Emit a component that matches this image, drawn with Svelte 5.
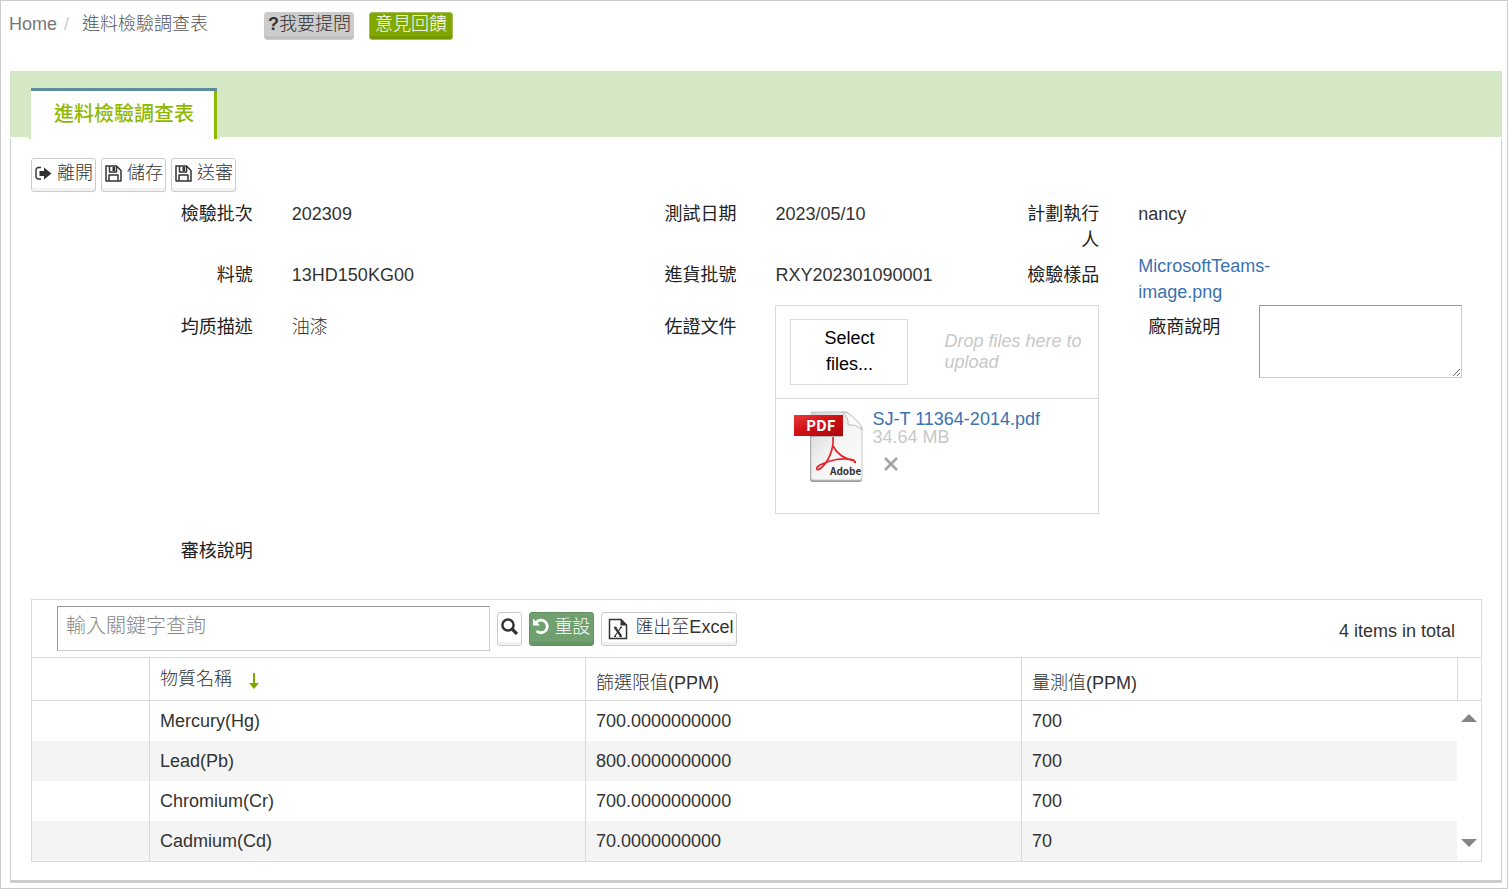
<script lang="ts">
	let keyword = $state('');
	let note = $state('');
	let ascending = $state(true);

	const rows = [
		{ name: 'Mercury(Hg)', limit: '700.0000000000', value: '700' },
		{ name: 'Lead(Pb)', limit: '800.0000000000', value: '700' },
		{ name: 'Chromium(Cr)', limit: '700.0000000000', value: '700' },
		{ name: 'Cadmium(Cd)', limit: '70.0000000000', value: '70' }
	];

	function reset() {
		keyword = '';
	}
</script>

{#snippet saveIcon()}
	<svg class="icon" viewBox="0 0 17 17" aria-hidden="true">
		<path d="M1 1h10.5l4.5 4.5v10.5h-15z M4 16v-6h9v6 M4.5 1.5v5.5h7V1.5" fill="none" stroke="#333" stroke-width="1.5" stroke-linejoin="round" />
		<path d="M7.5 2h2.5v4H7.5z" fill="#333" />
	</svg>
{/snippet}

<div class="page">
	<header>
		<nav class="breadcrumb">
			<a href="#home">Home</a>
			<span class="slash">/</span>
			<span>進料檢驗調查表</span>
		</nav>
		<button class="small ask"><b>?</b>我要提問</button>
		<button class="small feedback">意見回饋</button>
	</header>

	<div class="band">
		<div class="tab-wrap">
			<a class="tab" href="#survey">進料檢驗調查表</a>
		</div>
	</div>

	<main>
		<div class="actions">
			<button class="btn">
				<svg class="icon" viewBox="0 0 17 17" aria-hidden="true">
					<path d="M6 2.5H3.5a2.5 2.5 0 0 0-2.5 2.5v6.5a2.5 2.5 0 0 0 2.5 2.5H6" fill="none" stroke="#333" stroke-width="1.4" />
					<path d="M4.5 6h4.5V2.5L16.5 8.5l-7.5 6V11h-4.5z" fill="#333" />
				</svg>
				離開
			</button>
			<button class="btn">{@render saveIcon()}儲存</button>
			<button class="btn">{@render saveIcon()}送審</button>
		</div>

		<div class="row">
			<div class="label w2">檢驗批次</div>
			<div class="value w3">202309</div>
			<div class="label">測試日期</div>
			<div class="value w2">2023/05/10</div>
			<div class="label">計劃執行人</div>
			<div class="value w3">nancy</div>
		</div>
		<div class="row">
			<div class="label w2">料號</div>
			<div class="value w3">13HD150KG00</div>
			<div class="label">進貨批號</div>
			<div class="value w2">RXY202301090001</div>
			<div class="label">檢驗樣品</div>
			<div class="field w2"><a href="#sample">MicrosoftTeams-image.png</a></div>
		</div>
		<div class="row">
			<div class="label w2">均质描述</div>
			<div class="value w3">油漆</div>
			<div class="label">佐證文件</div>
			<div class="field w3">
				<div class="upload">
					<div class="drop">
						<button class="select">Select files...</button>
						<em>Drop files here to upload</em>
					</div>
					<div class="file">
						<svg class="pdf" viewBox="0 0 70 74" aria-hidden="true">
							<defs>
								<linearGradient id="paper" x1="0" y1="0" x2="1" y2="1">
									<stop offset="0" stop-color="#d4d4d4" />
									<stop offset="0.5" stop-color="#f4f4f4" />
									<stop offset="1" stop-color="#fff" />
								</linearGradient>
								<linearGradient id="ribbon" x1="0" y1="0" x2="1" y2="1">
									<stop offset="0" stop-color="#e8393a" />
									<stop offset="0.45" stop-color="#d11115" />
									<stop offset="1" stop-color="#a8070c" />
								</linearGradient>
							</defs>
							<path d="M16 5h38l14 14v50q0 3-3 3H19q-3 0-3-3z" fill="#999" />
							<path d="M17 2h36l15 15v51q0 2-2 2H19q-2 0-2-2z" fill="url(#paper)" stroke="#c8c8c8" />
							<path d="M48 2q7 5 6 13 8-1 14 5 0-5-5-9l-5-5q-4-4-10-4z" fill="#fafafa" stroke="#bbb" />
							<path d="M0 5h49v21H0z" fill="url(#ribbon)" />
							<path d="M16 26h33v1H16z" fill="#000" opacity="0.2" />
							<text x="12" y="21" class="pdf-name">PDF</text>
							<path d="M39 27c1 13-5 25-12 31-5 4-6 0-1-3 9-5 23-8 34-5M39 36q6 12 22 15" fill="none" stroke="#e5242a" stroke-width="1.7" stroke-linejoin="round" />
							<circle cx="61" cy="52" r="1.2" fill="#e5242a" />
							<text x="36" y="65" class="pdf-brand">Adobe</text>
						</svg>
						<div class="file-info">
							<a href="#pdf">SJ-T 11364-2014.pdf</a>
							<span>34.64 MB</span>
							<button class="remove" aria-label="Remove">
								<svg viewBox="0 0 14 14" aria-hidden="true">
									<path d="M1 1l12 12M13 1L1 13" stroke="#a3a3a3" stroke-width="2.6" />
								</svg>
							</button>
						</div>
					</div>
				</div>
			</div>
			<label class="label" for="note">廠商說明</label>
			<div class="field w2"><textarea id="note" bind:value={note}></textarea></div>
		</div>
		<div class="row review">
			<div class="label w2">審核說明</div>
		</div>

		<section class="grid">
			<div class="toolbar">
				<input type="text" placeholder="輸入關鍵字查詢" aria-label="輸入關鍵字查詢" bind:value={keyword} />
				<button class="btn" aria-label="Search">
					<svg class="icon" viewBox="0 0 17 17" aria-hidden="true">
						<circle cx="7" cy="7" r="5.6" fill="none" stroke="#333" stroke-width="2.5" />
						<path d="M11 11l5 5" stroke="#333" stroke-width="3.2" />
					</svg>
				</button>
				<button class="btn reset" onclick={reset}>
					<svg class="icon" viewBox="0 0 17 17" aria-hidden="true">
						<path d="M3 4.6A6.3 6.3 0 1 1 3.6 13" fill="none" stroke="#fff" stroke-width="2.8" />
						<path d="M0 0.5v7h7z" fill="#fff" />
					</svg>
					重設
				</button>
				<button class="btn export">
					<svg class="excel" viewBox="0 0 20 22" aria-hidden="true">
						<path d="M1.5 1.5h11.5l5.5 5.5v13.5h-17z" fill="#fff" stroke="#333" stroke-width="1.5" />
						<path d="M12.5 1l6.5 6.5h-6.5z" fill="#333" />
						<path d="M7 9.5l6 8.5" stroke="#333" stroke-width="2.2" />
						<path d="M13 9.5l-6 8.5M6 9.3h2.5M12 9.3h2M6 18.3h2M11.5 18.3H14" stroke="#333" stroke-width="1.2" />
					</svg>
					匯出至Excel
				</button>
				<span class="total">4 items in total</span>
			</div>

			<div class="data">
				<table>
					<colgroup>
						<col class="blank" />
						<col />
						<col />
						<col />
					</colgroup>
					<thead>
						<tr>
							<th></th>
							<th class="sorted">
								<button onclick={() => (ascending = !ascending)}>
									物質名稱
									<svg class:flip={!ascending} viewBox="0 0 12 18" aria-hidden="true">
										<path d="M5 1h2v10h4l-5 6-5-6h4z" fill="#7ea700" />
									</svg>
								</button>
							</th>
							<th>篩選限值(PPM)</th>
							<th>量測值(PPM)</th>
						</tr>
					</thead>
					<tbody>
						{#each rows as row}
							<tr>
								<td></td>
								<td>{row.name}</td>
								<td>{row.limit}</td>
								<td>{row.value}</td>
							</tr>
						{/each}
					</tbody>
				</table>
				<div class="scroll">
					<div class="scroll-head"></div>
					<div class="scroll-track">
						<button aria-label="Scroll up">
							<svg viewBox="0 0 16 8" aria-hidden="true"><path d="M0 8l8-8 8 8z" fill="#858585" /></svg>
						</button>
						<button aria-label="Scroll down">
							<svg viewBox="0 0 16 8" aria-hidden="true"><path d="M0 0l8 8 8-8z" fill="#858585" /></svg>
						</button>
					</div>
				</div>
			</div>
		</section>
	</main>
</div>

<style>
	:global(body) {
		background: #fff;
	}

	.page {
		box-sizing: border-box;
		min-height: 100vh;
		padding: 0 5px 5px 9px;
		border: 1px solid #ccc;
		font-family: 'Liberation Sans', 'Noto Sans CJK TC', sans-serif;
		font-size: 18px;
		font-weight: 300;
		line-height: 26px;
		color: #333;
	}

	.page * {
		box-sizing: border-box;
	}

	button,
	input,
	textarea {
		font: inherit;
		color: inherit;
	}

	button {
		cursor: pointer;
	}

	a {
		color: #3a72b0;
		text-decoration: none;
	}

	header {
		display: flex;
		align-items: flex-start;
		height: 70px;
		padding-top: 10px;
	}

	.breadcrumb {
		display: flex;
		margin: 0 56px 0 -1px;
		color: #555;
	}

	.breadcrumb a {
		color: #777;
	}

	.slash {
		width: 25px;
		padding-left: 7px;
		color: #ccc;
	}

	.small {
		height: 28px;
		margin: 1px 15px 0 0;
		padding: 0 4px 4px;
		border: 1px solid #ccc;
		border-radius: 3px;
		line-height: 22px;
	}

	.ask {
		padding: 0 2px 4px 3px;
		background: #ccc;
		box-shadow: inset 0 -3px 0 #bfbfbf;
	}

	.small b {
		font-weight: 700;
	}

	.feedback {
		padding: 0 5px 4px;
		border-color: #a3bd58;
		background: #80a800;
		box-shadow: inset 0 -3px 0 #759a00;
		color: #fff;
	}

	.band {
		display: flex;
		height: 66px;
		padding: 17px 18px 0;
		background: #d5e8c6;
	}

	.tab-wrap {
		height: 51px;
		padding: 0 3px;
		background: #d5e8c6;
	}

	.tab {
		display: block;
		height: 51px;
		padding: 10px 23px 0;
		border-top: 3px solid #5b8c9b;
		background: #fff;
		box-shadow: inset -3px 0 0 #8fb800;
		font-size: 20px;
		font-weight: 500;
		color: #8fb800;
	}

	main {
		margin-top: 2px;
		padding: 19px 19px 18px 20px;
		border: 1px solid #ccc;
		border-width: 0 1px 3px;
	}

	.actions {
		display: flex;
		gap: 5px;
	}

	.btn {
		display: flex;
		align-items: center;
		gap: 5px;
		height: 34px;
		padding: 0 2px 4px 3px;
		border: 1px solid #ccc;
		border-radius: 3px;
		background: #fff;
		box-shadow: inset 0 -3px 0 #f2f2f2;
	}

	.icon {
		width: 17px;
		height: 17px;
	}

	.row {
		display: grid;
		grid-template-columns: repeat(12, 1fr);
	}

	.review {
		margin-top: 15px;
	}

	.label,
	.value {
		padding: 9px 20px 0 19px;
	}

	.label {
		font-weight: 400;
		text-align: right;
		color: #222;
	}

	.field {
		padding: 0 20px 0 19px;
	}

	.w2 {
		grid-column: span 2;
	}

	.w3 {
		grid-column: span 3;
	}

	.upload {
		border: 1px solid #dadada;
	}

	.drop {
		display: flex;
		align-items: center;
		padding: 13px 14px;
		border-bottom: 1px solid #dadada;
	}

	.select {
		flex: none;
		width: 118px;
		height: 66px;
		margin-right: 36px;
		padding: 0 30px 2px;
		border: 1px solid #dadada;
		background: #fff;
		color: #000;
	}

	.drop em {
		line-height: 21px;
		color: #c8c8c8;
	}

	.file {
		display: flex;
		gap: 8px;
		min-height: 114px;
		padding: 11px 18px;
	}

	.pdf {
		flex: none;
		width: 70px;
		height: 74px;
	}

	.pdf-name {
		font: 600 15px 'Noto Sans CJK TC', sans-serif;
		fill: #fff;
	}

	.pdf-brand {
		font: 700 10px 'Noto Sans CJK TC', sans-serif;
		fill: #333;
	}

	.file-info {
		display: flex;
		flex-direction: column;
		align-items: flex-start;
		line-height: 18px;
	}

	.file-info span {
		color: #c8c8c8;
	}

	.remove {
		display: flex;
		margin: 11px 12px;
		padding: 0;
		border: 0;
		background: none;
	}

	.remove svg {
		width: 14px;
		height: 14px;
	}

	textarea {
		display: block;
		width: 100%;
		height: 73px;
		border: 1px solid #ccc;
		border-top-color: #999;
		border-left-color: #999;
	}

	.grid {
		margin-top: 35px;
		border: 1px solid #dadada;
	}

	.toolbar {
		display: flex;
		align-items: center;
		gap: 7px;
		height: 57px;
		padding: 0 26px 0 25px;
	}

	.toolbar input {
		width: 31%;
		height: 45px;
		padding: 0 8px 4px;
		border: 1px solid #ccc;
		border-top-color: #999;
		border-left-color: #999;
		font-size: 20px;
	}

	.toolbar input::placeholder {
		color: #888;
	}

	.toolbar .btn {
		padding-right: 3px;
	}

	.toolbar .reset {
		gap: 4px;
		border-color: #649064;
		background: #70a070;
		box-shadow: inset 0 -3px 0 #669566;
		color: #fff;
	}

	.toolbar .export {
		gap: 7px;
		padding-left: 6px;
	}

	.excel {
		width: 20px;
		height: 22px;
		margin-top: 4px;
	}

	.total {
		margin-left: auto;
		padding-top: 5px;
	}

	.data {
		display: flex;
	}

	table {
		flex: 1;
		width: 100%;
		table-layout: fixed;
		border-collapse: separate;
		border-spacing: 0;
	}

	.blank {
		width: 117px;
	}

	th {
		height: 44px;
		padding: 0 10px 4px;
		border: 1px solid #dadada;
		border-width: 1px 0 1px 1px;
		font-weight: 300;
		text-align: left;
		vertical-align: bottom;
	}

	th:first-child,
	td:first-child {
		border-left: 0;
	}

	th button {
		display: flex;
		align-items: center;
		gap: 16px;
		padding: 0;
		border: 0;
		background: none;
	}

	.sorted {
		padding-bottom: 8px;
	}

	.sorted svg {
		width: 12px;
		height: 18px;
		margin-top: 4px;
	}

	.flip {
		transform: scaleY(-1);
	}

	td {
		height: 40px;
		padding: 0 10px;
		border-left: 1px solid #dadada;
	}

	tbody tr:nth-child(even) {
		background: #f4f4f4;
	}

	.scroll {
		display: flex;
		flex: none;
		flex-direction: column;
		width: 24px;
	}

	.scroll-head {
		height: 44px;
		border: 1px solid #dadada;
		border-right: 0;
	}

	.scroll-track {
		display: flex;
		flex: 1;
		flex-direction: column;
		justify-content: space-between;
		align-items: center;
		padding: 13px 0 14px;
	}

	.scroll button {
		display: flex;
		padding: 0;
		border: 0;
		background: none;
	}

	.scroll button svg {
		width: 16px;
		height: 8px;
	}
</style>
